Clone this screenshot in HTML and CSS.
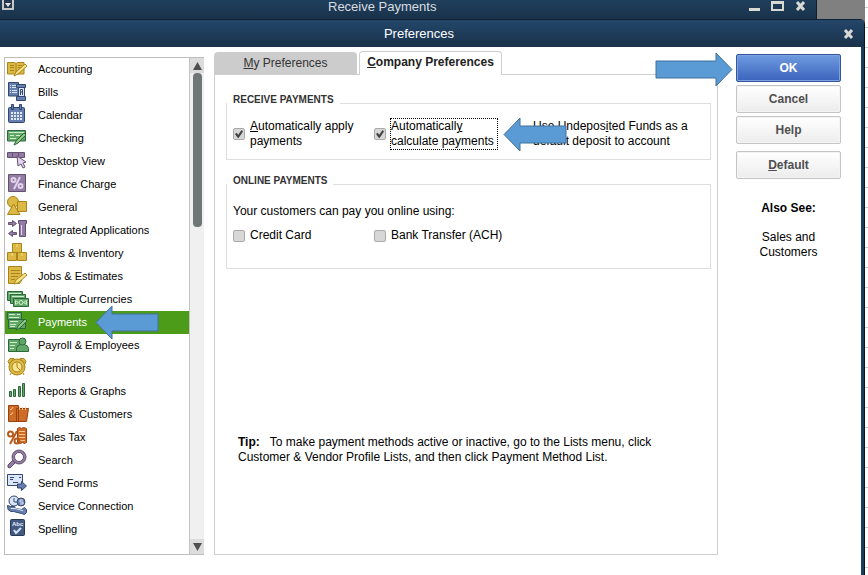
FILE: index.html
```html
<!DOCTYPE html>
<html lang="en">
<head>
<meta charset="utf-8">
<title>Preferences</title>
<link rel="stylesheet" href="styles.css">
</head>
<body>
<div class="workspace">
<header class="parent-window">
  <button class="sys-menu" type="button" aria-label="Window menu"><svg width="14" height="11" viewBox="0 0 14 11"><rect x="3" y="-1" width="10" height="10" fill="#24394f" stroke="#c8c8c8" stroke-width="2"/><path d="M5 3h6L8 7z" fill="#e4e4e4"/></svg></button>
  <span class="parent-title">Receive Payments</span>
  <div class="window-tools">
    <button type="button" aria-label="Minimize"><svg width="12" height="14"><path d="M1 8h11v3H1z" fill="#d9d9d4"/></svg></button>
    <button type="button" aria-label="Maximize"><svg width="13" height="14"><path d="M0 1h13v10H0zM2 4v5h9V4z" fill="#d9d9d4" fill-rule="evenodd"/></svg></button>
    <button type="button" aria-label="Close window"><svg width="11" height="14"><path d="M2 2l7 8M9 2l-7 8" stroke="#d9d9d4" stroke-width="3"/></svg></button>
  </div>
</header>
<main class="dialog">
  <header class="dialog-bar">
    <h1>Preferences</h1>
    <button class="dialog-close" type="button" aria-label="Close"><svg width="11" height="12"><path d="M2 2l7 8M9 2l-7 8" stroke="#d9d9d4" stroke-width="3"/></svg></button>
  </header>
  <div class="dialog-body">
    <nav class="sidebar" aria-label="Preference categories">
      <ul class="categories">
        <li><button type="button"><svg class="gold" viewBox="0 0 24 23"><path d="M2.500 4.500h7l1.500 1 1.500-1H19V16h-7l-1 1-1-1H2.500z"/><path class="ink" d="M5 7.500h4M5 9.500h4M5 12.500h4M13 7.500h4M13 9.500h3M11 6v9"/><path class="pen" d="M9 18l2-4 9-8 2 2-9 8z"/></svg>Accounting</button></li>
        <li><button type="button"><svg class="blue" viewBox="0 0 24 23"><path d="M3.500 1.500h10V15h-10z"/><path class="light" d="M5 4.500h1M7 4.500h5M5 6.500h1M7 6.500h5M5 9.500h1M7 9.500h5M5 11.500h1M7 11.500h5"/><path class="paper" d="M13.500 6.500h6v10h-6z"/><path d="M11.500 3.500h9v3h-9zM11.500 15.500h9v4h-9z"/><path class="ink" d="M15.500 14v-3h2v3M15.500 11V8.500h2V11"/></svg>Bills</button></li>
        <li><button type="button"><svg class="blue" viewBox="0 0 24 23"><rect x="3.500" y="3.500" width="16" height="15" rx="1"/><path d="M6.500.5h2v5h-2zM14.500.5h2v5h-2z"/><path class="dots" d="M6 9h12M6 12h12M6 15h12"/></svg>Calendar</button></li>
        <li><button type="button"><svg class="green" viewBox="0 0 24 23"><path d="M2.500 3.500h18V14h-18z"/><path class="light" d="M4 5.500h15M5 8.500h4M11 8.500h4M5 11.500h6"/><path class="penfill" d="M9 18l2-4 8-8 2 2-8 8z"/></svg>Checking</button></li>
        <li><button type="button"><svg class="purple" viewBox="0 0 24 23"><path d="M2.500 2.500h5v5h-5zM7.500 2.500h6v5h-6zM13.500 2.500h6v5h-6z"/><path class="paper" d="M12 6l9 6-3 1 2 4-2 1-2-4-3 2z"/></svg>Desktop View</button></li>
        <li><button type="button"><svg class="purple" viewBox="0 0 24 23"><path d="M3.500 1.500h17v17h-17z"/><g class="lightfig"><circle cx="8.500" cy="7" r="2"/><circle cx="15.500" cy="13" r="2"/><path d="M15 4L9 16"/></g></svg>Finance Charge</button></li>
        <li><button type="button"><svg class="gold" viewBox="0 0 24 23"><circle cx="8" cy="6" r="5.500"/><path d="M12.500 5.500h9v10h-9zM8.500 8l6.500 10.500H2.500z"/></svg>General</button></li>
        <li><button type="button"><svg class="purple" viewBox="0 0 24 23"><path d="M3.500 3.500h4v-2l4 3-4 3v-2h-4zM11.500 13.500h-4v-2l-4 3 4 3v-2h4zM13.500 1.500h8v3h-1v13h-6v-13h-1z"/><path class="light" d="M16.500 6v10"/></svg>Integrated Applications</button></li>
        <li><button type="button"><svg class="gold" viewBox="0 0 24 23"><path d="M7.500 1.500h9v9h-9zM2.500 10.500h9v8h-9zM12.500 10.500h9v8h-9z"/><path class="light" d="M12 2v3M7 11v3M17 11v3"/></svg>Items &amp; Inventory</button></li>
        <li><button type="button"><svg class="gold" viewBox="0 0 24 23"><path d="M3.500 1.500h13v14l-2 3h-11z"/><path class="ink" d="M6 5.500h9M6 8.500h9M6 11.500h7M6 14.500h4"/><path class="pen" d="M9 19l2-4 9-7 2 2-9 8z"/></svg>Jobs &amp; Estimates</button></li>
        <li><button type="button"><svg class="green" viewBox="0 0 24 23"><path d="M2.500 3.500h15v9h-15z"/><path class="light" d="M4 5.500h12"/><path d="M5.500 6.500h15v9h-15z"/><path class="light" d="M7 8.500h12"/><path d="M8.500 10.500h15v8h-15z"/><path class="light" d="M10.500 12.500v4l3-2zM21.500 12.500v4l-3-2z"/><circle class="light" cx="16" cy="14.500" r="2"/></svg>Multiple Currencies</button></li>
        <li class="selected"><button type="button" aria-current="true"><svg class="green" viewBox="0 0 24 23"><path d="M2.500 1.500h14v7h-14zM3.500 8.500h17v9h-17z"/><path class="light" d="M4 3.500h6M12 3.500h3M4 6.500h10M5 10.500h8M5 13.500h6M5 15.500h5"/><path class="penfill" d="M11 19l2-4 7-7 2 2-7 7z"/></svg>Payments</button>
          <svg class="callout callout-category" width="64" height="35" viewBox="0 0 64 35" aria-hidden="true"><path d="M1 17.500L17 1v8h46v17H17v8z"/></svg></li>
        <li><button type="button"><svg class="green" viewBox="0 0 24 23"><path d="M3.500 5.500h13v12h-13z"/><path class="light" d="M5 8.500h7M5 11.500h5M5 14.500h4"/><path d="M11.500 17.500v-3q0-3 4-4h4q4 1 4 4v3z"/><circle cx="17.500" cy="7.500" r="3.500"/></svg>Payroll &amp; Employees</button></li>
        <li><button type="button"><svg class="gold" viewBox="0 0 24 23"><path d="M5 1.500h4l-5 5-1-2zM15 1.500h4l2 3-1 2z"/><circle cx="12" cy="10" r="8"/><circle class="paper" cx="12" cy="10" r="5"/><path class="ink" d="M12 6v4l3 3M6 16l-1 2M18 16l1 2"/></svg>Reminders</button></li>
        <li><button type="button"><svg class="green" viewBox="0 0 24 23"><path d="M4.500 11.500h2v5h-2zM8.500 9.500h2v7h-2zM13.500 6.500h2v10h-2zM17.500 3.500h2v13h-2z"/></svg>Reports &amp; Graphs</button></li>
        <li><button type="button"><svg class="orange" viewBox="0 0 24 23"><path d="M3.500 2.500h10v16h-10zM11.500 5.500h12l-2 13h-10z"/><path class="light" d="M5 6l1 1 2-3M5 11l1 1 2-3M14.500 7V4M17.500 7V4M20.500 7V4"/></svg>Sales &amp; Customers</button></li>
        <li><button type="button"><svg class="orange" viewBox="0 0 24 23"><path d="M12.500 2.500l2-1 2 1 2-1 3 1v14l-2 1-2-1-2 1-3-1z"/><path class="light" d="M14 5.500h6M14 8.500h6M14 11.500h6M14 14.500h6"/><g class="darkfig"><circle cx="5.500" cy="8" r="2.500"/><circle cx="12" cy="15" r="2.500"/><path d="M12 5L5 18"/></g></svg>Sales Tax</button></li>
        <li><button type="button"><svg class="purple" viewBox="0 0 24 23"><path d="M8 11l2 3-5 5q-3 0-2-3z"/><circle cx="14" cy="8" r="7"/><circle class="white" cx="14" cy="8" r="4.500"/></svg>Search</button></li>
        <li><button type="button"><svg class="blue" viewBox="0 0 24 23"><path class="paper" d="M2.500 2.500h15v11h-15z"/><path class="ink" d="M5 5.500h4M5 7.500h3M8 10.500h5M14 5.500h2"/><path d="M12.500 12h4V9.500l5 4.500-5 4.500V16h-4z"/></svg>Send Forms</button></li>
        <li><button type="button"><svg class="blue" viewBox="0 0 24 23"><circle class="paper" cx="9" cy="6" r="5"/><path class="ink" d="M9 3v4h3"/><circle cx="16" cy="7" r="4"/><path class="light" d="M18 5h-3v2h3v2h-3"/><path d="M2.500 10.500l3 1h4l1 2 6 1 3-2 2 2v3l-2 2-3-1-8-2H6l-3-2z"/><path class="light" d="M6 13.500h4l8 2"/></svg>Service Connection</button></li>
        <li><button type="button"><svg class="blue dark" viewBox="0 0 24 23"><rect x="5.500" y="1.500" width="14" height="16" rx="1"/><text x="7" y="8">Abc</text><path class="tick" d="M9 12l2 3 5-5"/></svg>Spelling</button></li>
      </ul>
      <div class="scrollbar" aria-hidden="true">
        <span class="scroll-end"><svg width="9" height="8"><path d="M4.500 0L9 8H0z"/></svg></span>
        <span class="thumb"></span>
        <span class="scroll-end scroll-down"><svg width="9" height="8"><path d="M0 0h9L4.500 8z"/></svg></span>
      </div>
    </nav>
    <section class="content">
      <div class="tabs" role="tablist">
        <button type="button" role="tab" aria-selected="false"><u>M</u>y Preferences</button>
        <button type="button" role="tab" aria-selected="true"><u>C</u>ompany Preferences</button>
      </div>
      <div class="panel" role="tabpanel">
        <fieldset class="receive">
          <legend>RECEIVE PAYMENTS</legend>
          <div class="options">
            <label><input type="checkbox" checked><span><u>A</u>utomatically apply<br>payments</span></label>
            <label><input type="checkbox" checked><span class="focused">Automaticall<u>y</u><br>calculate payments</span></label>
            <label><input type="checkbox"><span>Use Undepos<u>i</u>ted Funds as a<br>default deposit to account</span><svg class="callout callout-option" width="64" height="35" viewBox="0 0 64 35" aria-hidden="true"><path d="M1 17.500L17 1v8h46v17H17v8z"/></svg></label>
          </div>
        </fieldset>
        <fieldset class="online">
          <legend>ONLINE PAYMENTS</legend>
          <p>Your customers can pay you online using:</p>
          <div class="options">
            <label><input type="checkbox"><span>Credit Card</span></label>
            <label><input type="checkbox"><span>Bank Transfer (ACH)</span></label>
          </div>
        </fieldset>
        <p class="tip"><b>Tip:</b>To make payment methods active or inactive, go to the Lists menu, click Customer &amp; Vendor Profile Lists, and then click Payment Method List.</p>
      </div>
    </section>
    <aside class="actions">
      <div class="ok-row"><button type="button" class="primary">OK</button><svg class="callout callout-ok" width="78" height="35" viewBox="0 0 78 35" aria-hidden="true"><path d="M77 17.500L61 1v8H1v17h60v8z"/></svg></div>
      <button type="button">Cancel</button>
      <button type="button">Help</button>
      <button type="button" class="default"><u>D</u>efault</button>
      <h2>Also See:</h2>
      <p>Sales and<br>Customers</p>
    </aside>
  </div>
</main>
</div>
<div class="sheet-edge"></div>
</body>
</html>
```
FILE: styles.css
```css
* { box-sizing: border-box; }
body {
  margin: 0;
  min-height: 100vh;
  display: flex;
  background: #fff;
  color: #000;
  font: 12px/15px "Liberation Sans", Arial, sans-serif;
}
button { font: inherit; color: inherit; border: 0; padding: 0; background: none; }
svg { display: block; flex: none; }
h1, h2, p, ul { margin: 0; padding: 0; }
u { text-underline-offset: 1px; }

.workspace { flex: 1; min-width: 0; display: flex; flex-direction: column; background: #808080; }
.sheet-edge { width: 3px; background: repeating-linear-gradient(#fff 0 7px, #c9c9c9 7px 8px, #fff 8px 20px); }

.parent-window {
  height: 19px;
  margin-right: 48px;
  display: grid;
  grid-template-columns: 328px 1fr auto;
  background: linear-gradient(#1f3f5c, #1a324a);
  border-right: 1px solid #101f30;
  color: #d9dde1;
  font-size: 13px;
}
.sys-menu { justify-self: start; align-self: start; }
.parent-title { line-height: 13px; }
.window-tools { display: flex; justify-content: flex-end; align-items: flex-start; gap: 11px; padding-right: 10px; }

.dialog {
  flex: 1;
  display: flex;
  flex-direction: column;
  background: #fff;
  border-right: 1px solid #0c151f;
  border-top: 1px solid #0f2133;
  border-top-right-radius: 5px;
  box-shadow: inset -3px 0 #1d3d5b;
}
.dialog-bar {
  height: 27px;
  display: grid;
  grid-template-columns: 1fr auto 1fr;
  align-items: center;
  padding-right: 10px;
  background: linear-gradient(#24466a, #1a324b);
  border-top-right-radius: 4px;
  color: #fff;
}
.dialog-bar h1 { grid-column: 2; font-size: 13px; font-weight: normal; padding-right: 16px; }
.dialog-close { justify-self: end; }
.dialog-body { flex: 1; display: flex; padding: 4px 23px 20px 4px; }

.sidebar {
  width: 200px;
  margin-top: 6px;
  display: flex;
  border: 1px solid #bdbdbd;
  border-right: 0;
  font-size: 11px;
}
.categories { flex: 1; list-style: none; }
.categories li { position: relative; }
.categories button { width: 100%; height: 23px; display: flex; align-items: center; gap: 9px; text-align: left; white-space: nowrap; }
.categories button svg { width: 24px; height: 23px; fill: var(--fill); stroke: var(--line); stroke-width: 1; }
.categories .selected { background: #4c9c19; color: #fff; }
.gold { --fill: #dcb945; --line: #aa8419; --pale: #f7e38b; }
.blue { --fill: #667fb1; --line: #33486f; --pale: #dbe5f8; }
.green { --fill: #62a767; --line: #2d683c; --pale: #cfedc9; }
.purple { --fill: #927ba5; --line: #62516f; --pale: #e3d2ed; }
.orange { --fill: #ce6b27; --line: #99420f; --pale: #ffc78d; }
.dark { --fill: #435982; --line: #263854; }
.categories .light, .categories .lightfig, .categories .tick { fill: none; stroke: var(--pale); }
.categories .lightfig { stroke-width: 2; }
.categories .darkfig { fill: none; stroke: #b75a1d; stroke-width: 2; }
.categories .ink { fill: none; stroke: var(--line); }
.categories .paper, .categories .pen { fill: var(--pale); }
.categories .white { fill: #fff; }
.categories .penfill { fill: #8cc57d; }
.categories .dots { stroke: #e3e9f7; stroke-width: 2; stroke-dasharray: 2 1; }
.categories .tick { stroke-width: 2; }
.categories text { fill: #e3ebf8; stroke: none; font-size: 6px; font-weight: bold; }

.scrollbar { width: 15px; display: flex; flex-direction: column; align-items: center; background: #f0f0f0; border-left: 1px solid #c4c4c4; }
.scroll-end { width: 100%; height: 15px; display: grid; place-items: center; background: #dcdcdc; fill: #505050; }
.scroll-down { margin-top: auto; }
.thumb { width: 9px; height: 154px; border-radius: 4px; background: #6f7676; }

.content { flex: 1; min-width: 0; margin-left: 10px; display: flex; flex-direction: column; }
.tabs { height: 23px; display: flex; align-items: flex-end; gap: 2px; }
.tabs button { width: 143px; height: 22px; background: #ccc; color: #333; border-radius: 4px 4px 0 0; }
.tabs button[aria-selected="true"] { height: 24px; margin-bottom: -1px; padding-bottom: 2px; z-index: 1; background: #fff; border: 1px solid #cfcfcf; border-bottom: 0; font-weight: bold; color: #222; }
.panel { flex: 1; display: flex; flex-direction: column; border: 1px solid #cfcfcf; padding: 19px 6px 89px 11px; }
fieldset { margin: 0; min-width: 0; border: 1px solid #dedede; padding: 0 6px; }
legend { padding: 0 6px 6px; margin-left: -6px; font-size: 10px; line-height: 12px; font-weight: bold; color: #333; }
.receive { height: 66px; }
.online { height: 94px; margin-top: 15px; }
.options { display: grid; grid-template-columns: 141px 142px 1fr; }
.receive .options { padding-top: 7px; }
.online p { padding: 11px 0 9px; }
.options label { position: relative; display: flex; align-items: center; gap: 5px; white-space: nowrap; }
input[type="checkbox"] { appearance: none; flex: none; width: 12px; height: 12px; margin: 0; border: 1px solid #aaa; border-radius: 2px; background: #d7d7d7; display: grid; place-items: center; }
input[type="checkbox"]:checked::before { content: ""; width: 8px; height: 8px; background: #444; clip-path: polygon(0 50%, 20% 35%, 40% 60%, 82% 0, 100% 18%, 45% 100%, 30% 95%); }
.focused { outline: 1px dotted #000; padding-right: 3px; }
.tip { margin-top: auto; padding: 0 40px 0 12px; }
.tip b { margin-right: 10px; }

.actions { width: 105px; margin: 3px 0 0 18px; display: flex; flex-direction: column; gap: 3px; text-align: center; }
.actions button { width: 105px; height: 28px; border: 1px solid #c5c5c5; border-radius: 2px; background: linear-gradient(#fff, #ececec); color: #505050; font-weight: bold; box-shadow: inset 0 0 0 1px #f4f4f4; }
.actions .primary { background: linear-gradient(#6f9be0, #3b63bc); border-color: #35559a; color: #fff; box-shadow: inset 0 0 0 1px #7ba2e3; }
.actions .default { margin-top: 4px; }
.actions h2 { margin-top: 19px; font-size: 12px; line-height: 15px; }
.actions p { margin-top: 11px; }
.ok-row { position: relative; }

.callout { position: absolute; z-index: 2; fill: #5b9bd5; stroke: #41719c; stroke-width: 1; pointer-events: none; }
.callout-category { left: 90px; top: -6px; }
.callout-option { left: -13px; top: -2px; }
.callout-ok { right: 108px; top: -2px; }
```
